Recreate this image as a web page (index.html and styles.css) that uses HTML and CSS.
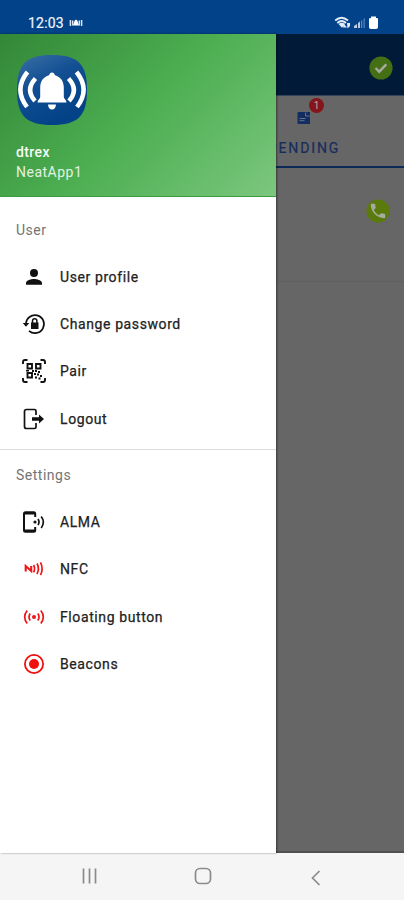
FILE: index.html
```html
<!DOCTYPE html>
<html lang="en">
<head>
<meta charset="utf-8">
<title>NeatApp</title>
<link rel="stylesheet" href="styles.css">
</head>
<body>
<div class="phone">
  <header class="status">
    <span class="clock">12:03</span>
    <svg class="status-bell" width="14" height="8" viewBox="0 0 14 8"><g fill="none" stroke="#dbe5f2" stroke-width="1.500"><path d="M1.400 1v6M3.700 1.500v5M12.600 1v6M10.300 1.500v5"/></g><path fill="#fff" d="M7 .5Q9 1 9 4L10 6.500H4L5 4Q5 1 7 .5Z"/></svg>
    <svg class="signals" width="46" height="16" viewBox="0 0 46 16"><g fill="none" stroke="#e4ebf5" stroke-width="1.900"><path d="M1.200 5.500Q7.500-.2 14 5.500M3.300 8Q7.700 4.200 12 8"/></g><path fill="#e4ebf5" d="M4.500 9Q7.700 6.600 11 9L8 12.800ZM10 9l3 3.500h-4zM13 8h3v3l-2.500 2.500z"/><path fill="#bdcce2" d="M20 13v-2l3-2v4zM24 13V8l2-1.500V13z"/><path fill="#6287b7" d="M27 13V6l1.200-1v8zM29.500 13V4l1.200-1v10z"/><path fill="#fff" d="M37 1.500h5V3h1q1 0 1 1v8q0 2-2 2h-5q-2 0-2-2V4q0-1 2-1z"/></svg>
  </header>
  <div class="stage">
    <main class="screen">
      <div class="appbar">
        <svg class="check" width="24" height="24" viewBox="0 0 24 24"><circle cx="12" cy="12" r="11.600" fill="#446f15"/><path d="M6.500 12l3.700 3.700L17.300 8.300" fill="none" stroke="#a6aaa2" stroke-width="2.400"/></svg>
      </div>
      <div class="tab">
        <div class="tab-icon">
          <svg width="14" height="14" viewBox="0 0 14 14"><path fill="#132d63" d="M1.500 1H9l4 4v8H1.500Q.5 13 .5 12V2Q.5 1 1.500 1Z"/><path d="M8.500 1.500V5H13M2.500 7.500h6M2.500 9.700h5" stroke="#69717f" fill="none"/><path fill="#132d63" d="M9 1h4v3.500h-1z"/></svg>
          <span class="badge">1</span>
        </div>
        <span class="tab-label">PENDING</span>
      </div>
      <div class="call-row">
        <svg width="24" height="24" viewBox="0 0 24 24"><circle cx="12" cy="12" r="11.600" fill="#5a7a0b"/><path transform="translate(2.400 2.400) scale(.8)" fill="#a7aca0" d="M6.620 10.790c1.440 2.830 3.760 5.140 6.590 6.590l2.200-2.200c.27-.27.67-.36 1.020-.24 1.120.37 2.330.57 3.570.57.550 0 1 .45 1 1V20c0 .55-.45 1-1 1C10.610 21 3 13.390 3 4c0-.55.45-1 1-1h3.500c.55 0 1 .45 1 1 0 1.250.2 2.450.57 3.570.11.350.030.740-.25 1.020z"/></svg>
      </div>
    </main>
    <aside class="drawer">
      <div class="profile">
        <svg class="logo" width="70" height="70" viewBox="0 0 70 70"><defs><linearGradient id="blue" x1="0" y1="0" x2=".5" y2="1"><stop offset="0" stop-color="#3b70a5"/><stop offset=".45" stop-color="#124f93"/><stop offset="1" stop-color="#034287"/></linearGradient></defs><path fill="url(#blue)" d="M35 0C61 0 70 9 70 35S61 70 35 70 0 61 0 35 9 0 35 0Z"/><path fill="#fff" d="M35 17.500c1.500 0 2.500 1.200 3 2.700 5.500 1.500 8.800 6 8.800 12.300v9.500c0 2 2.700 3 2.700 5.500h-29c0-2.500 2.700-3.500 2.700-5.500v-9.500c0-6.300 3.300-10.800 8.800-12.300.5-1.500 1.500-2.700 3-2.700zM31 49.500h8q-.5 5-4 5t-4-5z"/><g fill="none" stroke="#fff" stroke-width="4.500"><path d="M10.500 17Q-3.500 34.500 10 52M18.500 23.500Q8 34.500 18 46M59.500 17Q73.500 34.500 60 52M51.500 23.500Q62 34.500 52 46"/></g></svg>
        <div class="name">dtrex</div>
        <div class="app">NeatApp1</div>
      </div>
      <section class="group">
        <h2>User</h2>
        <a class="item"><svg width="24" height="24" viewBox="0 0 24 24"><path d="M12 12a4 4 0 1 0 0-8 4 4 0 0 0 0 8zm0 2c-2.700 0-8 1.300-8 4v1.800h16V18c0-2.700-5.300-4-8-4z"/></svg><span>User profile</span></a>
        <a class="item"><svg width="24" height="24" viewBox="0 0 24 24"><path d="M4 12a9 9 0 1 1 3 6.800" fill="none" stroke="#111" stroke-width="1.700"/><path d="M.7 11h6.600L4 14.800zM9 10.500h7.500V17H9z"/><path d="M10.500 11V9a2.200 2.200 0 0 1 4.400 0v2" fill="none" stroke="#111" stroke-width="1.500"/></svg><span>Change password</span></a>
        <a class="item"><svg width="24" height="24" viewBox="0 0 24 24"><g fill="none" stroke="#111" stroke-width="1.900"><path d="M1 5V3Q1 1 3 1h2.500M18.500 1H21q2 0 2 2v2M1 19v2q0 2 2 2h2.500M18.500 23H21q2 0 2-2v-2"/><path d="M5.500 5h4.500v4.500H5.500zM14 5h4.500v4.500H14zM5.500 14h4.500v4.500H5.500z"/></g><path d="M10 11h2v2h-2zM13 11h2v2h-2zM16 12h2v2h-2zM12 14h2v2h-2zM15 14.500h2v2h-2zM18 16h2v2h-2zM13 17.500h2v2h-2zM16.500 18.500h2v2h-2zM4 11h3v1.500H4z"/></svg><span>Pair</span></a>
        <a class="item"><svg width="24" height="24" viewBox="0 0 24 24"><path d="M14 8V4q0-1.500-1.500-1.500h-8Q2.500 2.500 2.500 4.500v15q0 2 2 2h8q1.500 0 1.500-1.500v-4" fill="none" stroke="#111" stroke-width="1.700"/><path d="M10 10.200h7V7.500l5 4.500-5 4.500v-2.700h-7z"/></svg><span>Logout</span></a>
      </section>
      <section class="group settings">
        <h2>Settings</h2>
        <a class="item"><svg width="24" height="24" viewBox="0 0 24 24"><path d="M13.200 7V3.700q0-1.500-1.500-1.500H3.500Q2 2.200 2 3.700v16.600q0 1.500 1.500 1.500h8.200q1.500 0 1.500-1.500V17" fill="none" stroke="#111" stroke-width="2"/><path d="M2 2h11v2.500H2zM2 19.500h11V22H2z"/><circle cx="13" cy="12" r="1.600"/><path d="M16 9Q18 12 16 15M19.200 6.500Q23.500 12 19.200 18" fill="none" stroke="#111" stroke-width="1.700"/></svg><span>ALMA</span></a>
        <a class="item"><svg width="24" height="24" viewBox="0 0 24 24"><g fill="none" stroke="#ee1717" stroke-width="1.700"><path d="M3.700 14.500V9l5.500 5V9" stroke-width="2.100"/><path d="M11.500 8Q13.700 11.500 11.500 15.200M15 6.500Q17.800 11.500 15 17M18.500 5.300Q21.700 11.500 18.500 18.200"/></g></svg><span>NFC</span></a>
        <a class="item"><svg width="24" height="24" viewBox="0 0 24 24"><circle cx="12" cy="12" r="2" fill="#ee1717"/><g fill="none" stroke="#ee1717" stroke-width="1.700"><path d="M5.200 5.500Q.2 12 5.200 18.500M8.200 8.500Q5.800 12 8.200 15.500M18.800 5.500Q23.800 12 18.800 18.500M15.800 8.500Q18.200 12 15.800 15.500"/></g></svg><span>Floating button</span></a>
        <a class="item"><svg width="24" height="24" viewBox="0 0 24 24"><circle cx="12" cy="12" r="9.100" fill="none" stroke="#f01010" stroke-width="1.800"/><circle cx="12" cy="12" r="5" fill="#f01010"/></svg><span>Beacons</span></a>
      </section>
    </aside>
  </div>
  <nav class="sysnav">
    <svg width="18" height="18" viewBox="0 0 18 18"><path d="M2.500 1.500v15M8.500 1.500v15M14.500 1.500v15"/></svg>
    <svg width="18" height="18" viewBox="0 0 18 18"><rect x="1.500" y="1.500" width="15" height="15" rx="4.500"/></svg>
    <svg class="back" width="18" height="18" viewBox="0 0 18 18"><path d="M12.500 2L5.500 9l7 7"/></svg>
  </nav>
</div>
</body>
</html>
```
FILE: styles.css
```css
* { box-sizing: border-box; }
body { margin: 0; font-family: Roboto, "Liberation Sans", sans-serif; }
svg { display: block; flex: none; }
.phone { width: 404px; height: 900px; display: flex; flex-direction: column; overflow: hidden; }

.status { height: 34px; flex: none; background: #024289; display: flex; align-items: center; padding: 12px 24px 0 28px; color: #eef3fa; }
.clock { font-size: 14px; font-weight: 400; line-height: 20px; letter-spacing: .2px; width: 36px; -webkit-text-stroke: .2px; }
.status-bell { margin-left: 5px; }
.signals { margin-left: auto; }

.stage { height: 819px; flex: none; display: grid; }
.screen, .drawer { grid-area: 1 / 1; }
.screen { background: #666; border-bottom: 2px solid #505050; }
.appbar { height: 62px; background: #001a37; padding: 22px 11px 0 0; display: flex; justify-content: flex-end; border-bottom: 1px solid #34445b; }
.tab { height: 72px; margin-left: 202px; border-bottom: 2px solid #0c2a57; display: flex; flex-direction: column; align-items: center; padding: 15px 0 0; }
.tab-icon { position: relative; left: 1px; }
.badge { position: absolute; left: 12px; top: -13px; width: 15px; height: 15px; border-radius: 50%; background: #86141b; color: #c4a9ab; font-size: 10px; line-height: 15px; text-align: center; }
.tab-label { margin-top: 13px; font-size: 14px; line-height: 20px; font-weight: 400; letter-spacing: 1.9px; margin-left: 2px; color: #172c5d; -webkit-text-stroke: .2px; }
.call-row { height: 114px; display: flex; justify-content: flex-end; padding: 31px 14px 0 0; border-bottom: 1px solid #5f5f5f; }

.drawer { width: 276px; background: #fff; z-index: 1; box-shadow: 1px 0 2px rgba(0, 0, 0, .45); }
.profile { height: 163px; padding: 21px 16px 0; background: linear-gradient(135deg, #338737 0%, #4cae51 50%, #7cc77e 100%); border-bottom: 1px solid #3b9b40; color: #f5fbf5; }
.logo { margin-left: 1px; }
.name { margin-top: 17px; font-size: 14px; line-height: 20px; font-weight: 500; letter-spacing: .4px; }
.app { font-size: 14px; line-height: 20px; color: #e0f2e1; letter-spacing: .5px; }
.group { padding-top: 21px; height: 252px; }
.group.settings { border-top: 1px solid #dcdcdc; height: auto; padding-top: 13px; }
h2 { margin: 0 0 10px 16px; font-size: 14px; line-height: 25px; font-weight: 400; letter-spacing: .5px; color: #747474; }
.settings h2 { margin-bottom: 10.4px; }
.item { display: flex; align-items: center; height: 47.3px; padding-left: 22px; gap: 14px; font-size: 14px; font-weight: 400; color: #222; letter-spacing: .6px; -webkit-text-stroke: .25px; }
.item svg { fill: #111; -webkit-text-stroke: 0; }

.sysnav { flex: 1; background: #f5f5f5; display: flex; justify-content: space-between; padding: 14px 79px 0 81px; }
.sysnav svg { fill: none; stroke: #8b8b8b; stroke-width: 1.7; }
.sysnav .back { margin-top: 2px; }
```
